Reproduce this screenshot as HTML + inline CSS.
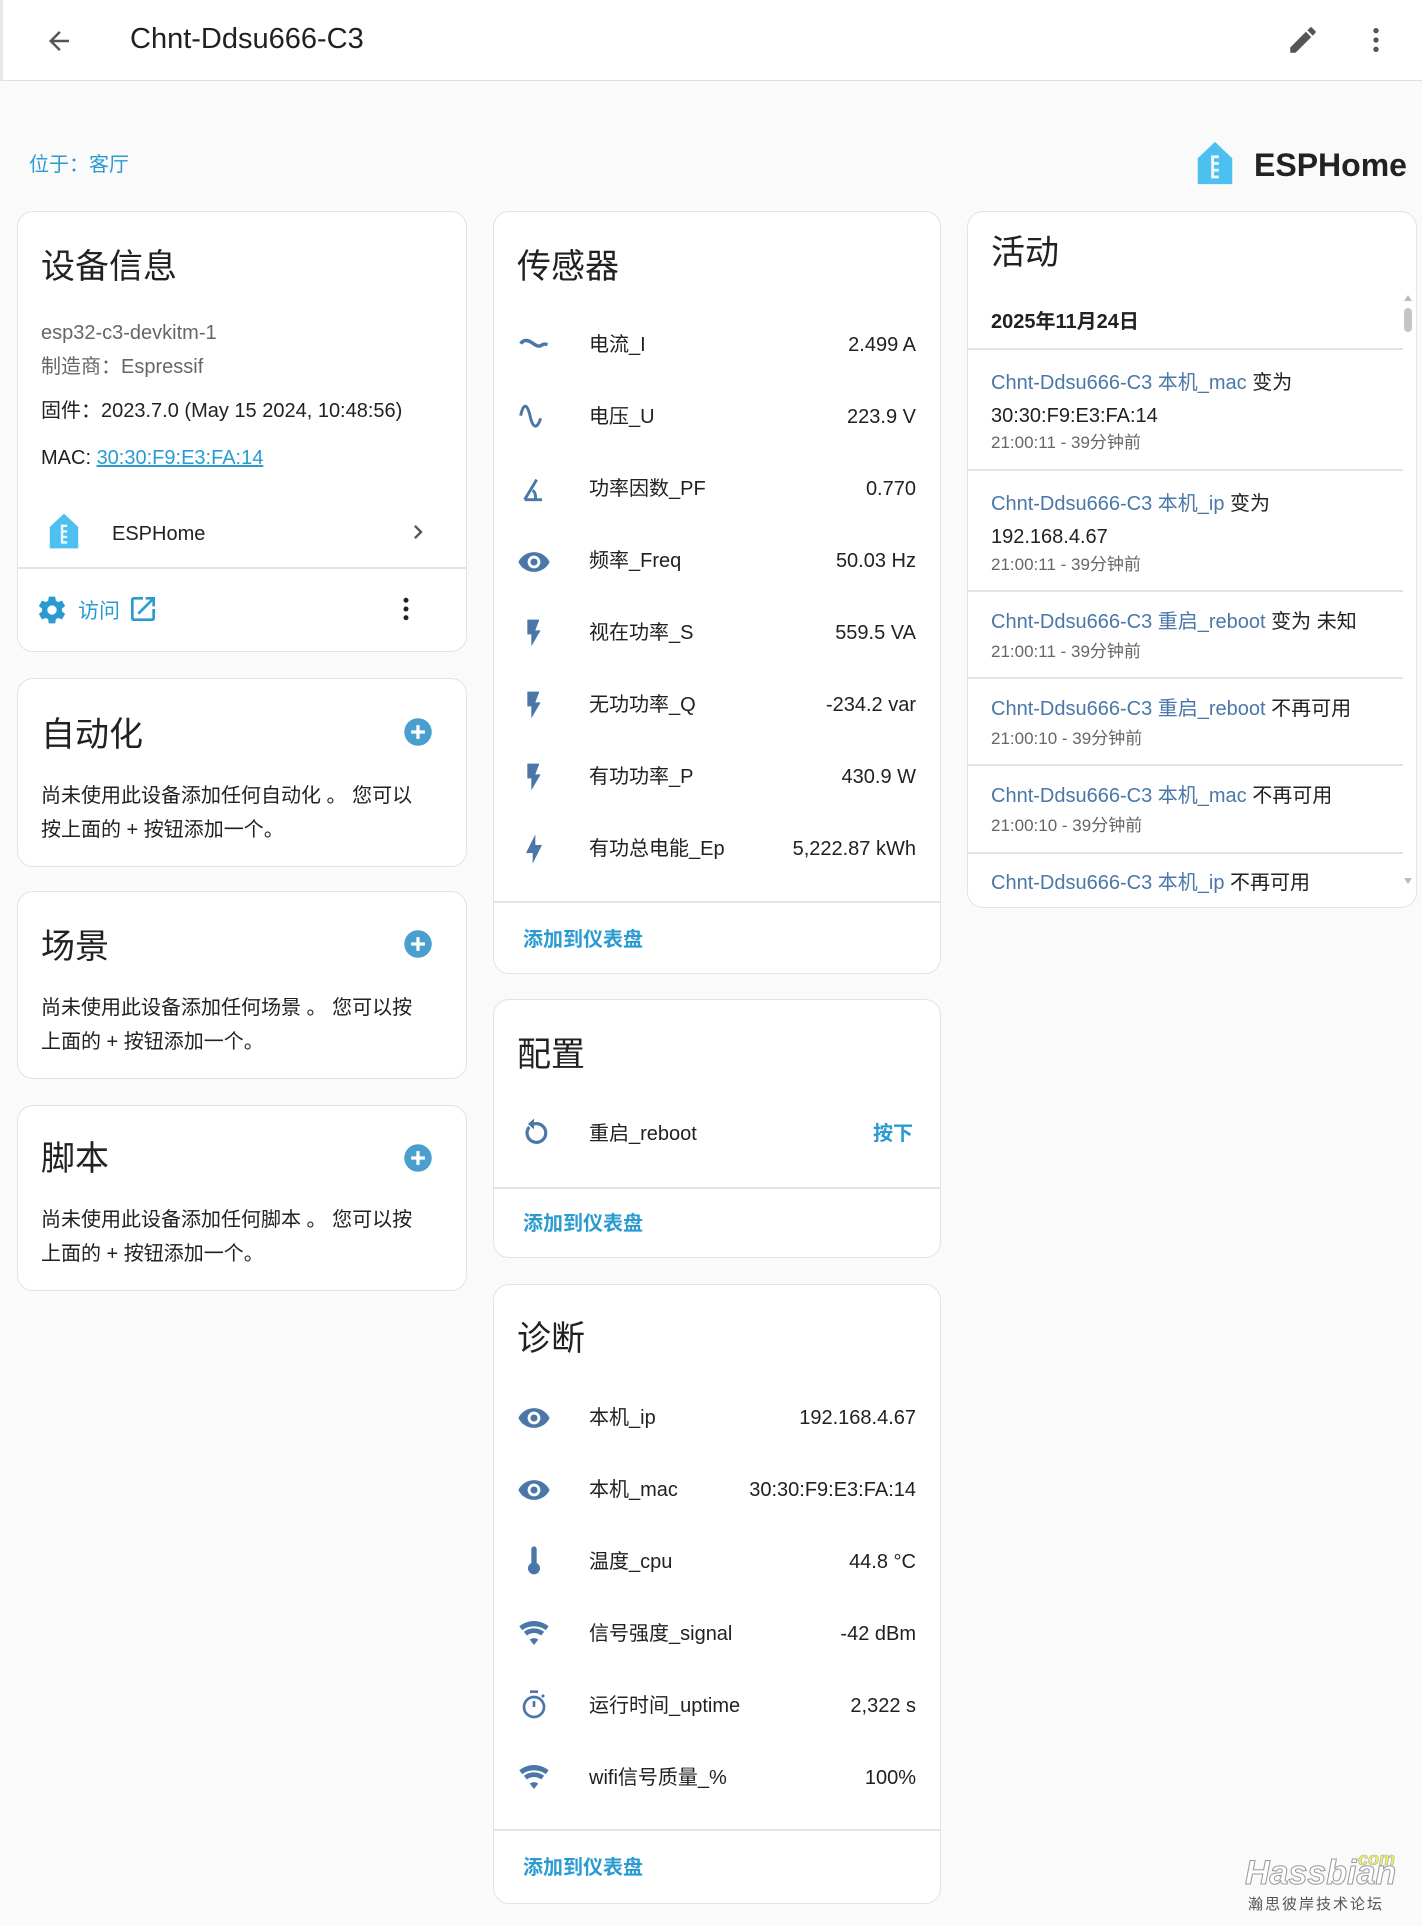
<!DOCTYPE html>
<html><head><meta charset="utf-8"><style>
*{margin:0;padding:0;box-sizing:border-box}
body{width:1422px;height:1926px;background:#fafafa;font-family:"Liberation Sans","Noto Sans CJK SC",sans-serif;color:#212121;position:relative;overflow:hidden}
.a{position:absolute;white-space:nowrap}
.card{position:absolute;background:#fff;border:1.5px solid #e3e3e3;border-radius:16px}
.t{position:absolute;font-size:34px;line-height:40px;color:#212121;margin-top:3px}
.r{position:absolute;font-size:20px;line-height:28px;margin-top:3px}
.hr{position:absolute;height:1.5px;background:#e3e3e3}
.link{color:#2a9bd1}
.ent{color:#4a77a8}
.ic{position:absolute}
.gray{color:#666}
</style></head><body>
<div class="a" style="left:0;top:0;width:1422px;height:81px;background:#fff;border-bottom:1.5px solid #e0e0e0;border-left:3px solid #e8e8e8"></div>
<svg class="ic" style="left:44px;top:26px" width="30" height="30" viewBox="0 0 24 24"><path d="M20 11H7.8l5.6-5.6L12 4l-8 8 8 8 1.4-1.4L7.8 13H20z" fill="#555"/></svg>
<div class="a" style="left:130px;top:20px;font-size:29px;line-height:38px;color:#212121">Chnt-Ddsu666-C3</div>
<svg class="ic" style="left:1286px;top:23px" width="34" height="34" viewBox="0 0 24 24"><path d="M3 17.25V21h3.75L17.8 9.94l-3.75-3.75zM20.7 7.04a1 1 0 000-1.41l-2.34-2.34a1 1 0 00-1.41 0l-1.83 1.83 3.75 3.75z" fill="#555"/></svg>
<svg class="ic" style="left:1360px;top:24px" width="32" height="32" viewBox="0 0 24 24"><circle cx="12" cy="5" r="2" fill="#555"/><circle cx="12" cy="12" r="2" fill="#555"/><circle cx="12" cy="19" r="2" fill="#555"/></svg>

<div class="a link" style="left:29px;top:152px;font-size:20px;line-height:26px">位于：客厅</div>
<svg class="ic" style="left:1192px;top:140px" width="46" height="46" viewBox="0 0 24 24"><path d="M12 1L3 9.5V23h18V9.5z" fill="#4dc0ef"/><path d="M10 8h4v1.5h-2.5v2h2.5v1.5h-2.5v2h2.5v1.5h-2.5v2h2.5V20H10z" fill="#fff" opacity=".9"/></svg>
<div class="a" style="left:1254px;top:145px;font-size:32px;line-height:40px;font-weight:bold;color:#222">ESPHome</div>

<div class="card" style="left:17px;top:211px;width:450px;height:441px"></div>
<div class="t" style="left:41px;top:244px">设备信息</div>
<div class="r gray" style="left:41px;top:316px">esp32-c3-devkitm-1</div>
<div class="r gray" style="left:41px;top:350px">制造商：Espressif</div>
<div class="r" style="left:41px;top:394px">固件：2023.7.0 (May 15 2024, 10:48:56)</div>
<div class="r" style="left:41px;top:441px">MAC: <span class="link" style="text-decoration:underline">30:30:F9:E3:FA:14</span></div>
<svg class="ic" style="left:45px;top:512px" width="38" height="38" viewBox="0 0 24 24"><path d="M12 1L3 9.5V23h18V9.5z" fill="#4dc0ef"/><path d="M10 8h4v1.5h-2.5v2h2.5v1.5h-2.5v2h2.5v1.5h-2.5v2h2.5V20H10z" fill="#fff" opacity=".9"/></svg>
<div class="r" style="left:112px;top:517px">ESPHome</div>
<svg class="ic" style="left:404px;top:518px" width="28" height="28" viewBox="0 0 24 24"><path d="M8.6 16.6L13.2 12 8.6 7.4 10 6l6 6-6 6z" fill="#555"/></svg>
<div class="hr" style="left:17px;top:567px;width:450px"></div>
<svg class="ic" style="left:36px;top:594px" width="32" height="32" viewBox="0 0 24 24"><path d="M12 15.5A3.5 3.5 0 1112 8.5a3.5 3.5 0 010 7zm7.43-2.530c.04-.32.07-.64.07-.97s-.03-.66-.07-1l2.11-1.63a.5.5 0 00.12-.64l-2-3.46a.5.5 0 00-.61-.22l-2.49 1a7.3 7.3 0 00-1.690-.98l-.38-2.65A.49.49 0 0014 2h-4a.49.49 0 00-.49.42l-.38 2.65c-.61.25-1.17.59-1.69.98l-2.49-1a.5.5 0 00-.61.22l-2 3.46a.5.5 0 00.12.64L4.57 11c-.04.34-.07.67-.07 1s.03.65.07.97l-2.11 1.66a.5.5 0 00-.12.64l2 3.46c.12.22.39.3.61.22l2.49-1.01c.52.4 1.08.73 1.69.98l.38 2.65c.03.24.24.42.49.42h4c.25 0 .46-.18.49-.42l.38-2.65c.61-.25 1.17-.58 1.69-.98l2.49 1.01c.22.08.49 0 .61-.22l2-3.46a.5.5 0 00-.12-.64z" fill="#2a9bd1"/></svg>
<div class="a link" style="left:78px;top:598px;font-size:21px;line-height:28px">访问</div>
<svg class="ic" style="left:127px;top:593px" width="32" height="32" viewBox="0 0 24 24"><path d="M14 3v2h3.6l-9.8 9.8 1.4 1.4L19 6.4V10h2V3zM19 19H5V5h7V3H5a2 2 0 00-2 2v14a2 2 0 002 2h14a2 2 0 002-2v-7h-2z" fill="#2a9bd1"/></svg>
<svg class="ic" style="left:391px;top:594px" width="30" height="30" viewBox="0 0 24 24"><circle cx="12" cy="5" r="2" fill="#222"/><circle cx="12" cy="12" r="2" fill="#222"/><circle cx="12" cy="19" r="2" fill="#222"/></svg>

<div class="card" style="left:17px;top:678px;width:450px;height:189px"></div>
<div class="t" style="left:41px;top:712px">自动化</div>
<svg class="ic" style="left:403px;top:717px" width="30" height="30" viewBox="0 0 24 24"><circle cx="12" cy="12" r="11" fill="#4a9fcf"/><path d="M12 6.5v11M6.5 12h11" stroke="#fff" stroke-width="2.6"/></svg>
<div class="r" style="left:41px;top:776px;line-height:34px">尚未使用此设备添加任何自动化 。 您可以<br>按上面的 + 按钮添加一个。</div>

<div class="card" style="left:17px;top:891px;width:450px;height:188px"></div>
<div class="t" style="left:41px;top:924px">场景</div>
<svg class="ic" style="left:403px;top:929px" width="30" height="30" viewBox="0 0 24 24"><circle cx="12" cy="12" r="11" fill="#4a9fcf"/><path d="M12 6.5v11M6.5 12h11" stroke="#fff" stroke-width="2.6"/></svg>
<div class="r" style="left:41px;top:988px;line-height:34px">尚未使用此设备添加任何场景 。 您可以按<br>上面的 + 按钮添加一个。</div>

<div class="card" style="left:17px;top:1105px;width:450px;height:186px"></div>
<div class="t" style="left:41px;top:1136px">脚本</div>
<svg class="ic" style="left:403px;top:1143px" width="30" height="30" viewBox="0 0 24 24"><circle cx="12" cy="12" r="11" fill="#4a9fcf"/><path d="M12 6.5v11M6.5 12h11" stroke="#fff" stroke-width="2.6"/></svg>
<div class="r" style="left:41px;top:1200px;line-height:34px">尚未使用此设备添加任何脚本 。 您可以按<br>上面的 + 按钮添加一个。</div>

<div class="card" style="left:493px;top:211px;width:448px;height:763px"></div>
<div class="t" style="left:517px;top:244px">传感器</div>
<svg class="ic" style="left:518px;top:329px" width="32" height="32" viewBox="0 0 24 24"><path d="M2 11c2-3 5-3 8-1s5 4 8 2c1.5-1 2.5-1 4 0" stroke="#4a77a8" stroke-width="2.6" fill="none"/></svg>
<svg class="ic" style="left:518px;top:401px" width="32" height="32" viewBox="0 0 24 24"><path d="M2 11C4 1 7 2 9 11s5 11 8 2" stroke="#4a77a8" stroke-width="2.2" fill="none"/></svg>
<svg class="ic" style="left:518px;top:473px" width="32" height="32" viewBox="0 0 24 24"><path d="M5 20h13M5 20L14 5M11 13c2 1.5 2.5 4 2 7" stroke="#4a77a8" stroke-width="2.2" fill="none"/></svg>
<svg class="ic" style="left:517px;top:545px" width="34" height="34" viewBox="0 0 24 24"><path d="M12 5C7 5 2.7 8.1 1 12c1.7 3.9 6 7 11 7s9.3-3.1 11-7c-1.7-3.9-6-7-11-7zm0 11.5a4.5 4.5 0 110-9 4.5 4.5 0 010 9zm0-7a2.5 2.5 0 100 5 2.5 2.5 0 000-5z" fill="#4a77a8"/></svg>
<svg class="ic" style="left:518px;top:617px" width="32" height="32" viewBox="0 0 24 24"><path d="M7 2v11h3v9l7-12h-4l3-8z" fill="#4a77a8"/></svg>
<svg class="ic" style="left:518px;top:689px" width="32" height="32" viewBox="0 0 24 24"><path d="M7 2v11h3v9l7-12h-4l3-8z" fill="#4a77a8"/></svg>
<svg class="ic" style="left:518px;top:761px" width="32" height="32" viewBox="0 0 24 24"><path d="M7 2v11h3v9l7-12h-4l3-8z" fill="#4a77a8"/></svg>
<svg class="ic" style="left:518px;top:833px" width="32" height="32" viewBox="0 0 24 24"><path d="M11 15H6l7-14v8h5l-7 14z" fill="#4a77a8"/></svg>
<div class="r" style="left:589px;top:328px">电流_I</div><div class="r" style="right:506px;top:328px">2.499 A</div>
<div class="r" style="left:589px;top:400px">电压_U</div><div class="r" style="right:506px;top:400px">223.9 V</div>
<div class="r" style="left:589px;top:472px">功率因数_PF</div><div class="r" style="right:506px;top:472px">0.770</div>
<div class="r" style="left:589px;top:544px">频率_Freq</div><div class="r" style="right:506px;top:544px">50.03 Hz</div>
<div class="r" style="left:589px;top:616px">视在功率_S</div><div class="r" style="right:506px;top:616px">559.5 VA</div>
<div class="r" style="left:589px;top:688px">无功功率_Q</div><div class="r" style="right:506px;top:688px">-234.2 var</div>
<div class="r" style="left:589px;top:760px">有功功率_P</div><div class="r" style="right:506px;top:760px">430.9 W</div>
<div class="r" style="left:589px;top:832px">有功总电能_Ep</div><div class="r" style="right:506px;top:832px">5,222.87 kWh</div>
<div class="hr" style="left:493px;top:901px;width:448px"></div>
<div class="r link" style="left:523px;top:923px;font-weight:bold">添加到仪表盘</div>

<div class="card" style="left:493px;top:999px;width:448px;height:259px"></div>
<div class="t" style="left:517px;top:1032px">配置</div>
<svg class="ic" style="left:518px;top:1116px" width="32" height="32" viewBox="0 0 24 24"><path d="M8.5 8.2A7 7 0 1012 6" stroke="#4a77a8" stroke-width="2.4" fill="none"/><path d="M12 2v8L7.5 6z" fill="#4a77a8"/></svg>
<div class="r" style="left:589px;top:1117px">重启_reboot</div>
<div class="r link" style="right:509px;top:1117px;font-weight:bold">按下</div>
<div class="hr" style="left:493px;top:1187px;width:448px"></div>
<div class="r link" style="left:523px;top:1207px;font-weight:bold">添加到仪表盘</div>

<div class="card" style="left:493px;top:1284px;width:448px;height:620px"></div>
<div class="t" style="left:517px;top:1316px">诊断</div>
<svg class="ic" style="left:517px;top:1401px" width="34" height="34" viewBox="0 0 24 24"><path d="M12 5C7 5 2.7 8.1 1 12c1.7 3.9 6 7 11 7s9.3-3.1 11-7c-1.7-3.9-6-7-11-7zm0 11.5a4.5 4.5 0 110-9 4.5 4.5 0 010 9zm0-7a2.5 2.5 0 100 5 2.5 2.5 0 000-5z" fill="#4a77a8"/></svg>
<svg class="ic" style="left:517px;top:1473px" width="34" height="34" viewBox="0 0 24 24"><path d="M12 5C7 5 2.7 8.1 1 12c1.7 3.9 6 7 11 7s9.3-3.1 11-7c-1.7-3.9-6-7-11-7zm0 11.5a4.5 4.5 0 110-9 4.5 4.5 0 010 9zm0-7a2.5 2.5 0 100 5 2.5 2.5 0 000-5z" fill="#4a77a8"/></svg>
<svg class="ic" style="left:518px;top:1545px" width="32" height="32" viewBox="0 0 24 24"><path d="M10 3a2 2 0 014 0v10.5a4.5 4.5 0 11-4 0z" fill="#4a77a8"/></svg>
<svg class="ic" style="left:518px;top:1617px" width="32" height="32" viewBox="0 0 24 24"><path d="M12 21l3.2-4a5 5 0 00-6.4 0zM12 3C7.8 3 4 4.6 1 7l2.2 2.8A14 14 0 0112 7a14 14 0 018.8 2.8L23 7c-3-2.4-6.8-4-11-4zm0 5.5c-2.9 0-5.5 1-7.6 2.6l2.2 2.8A9 9 0 0112 12a9 9 0 015.4 1.9l2.2-2.8A12.3 12.3 0 0012 8.5z" fill="#4a77a8"/></svg>
<svg class="ic" style="left:518px;top:1689px" width="32" height="32" viewBox="0 0 24 24"><circle cx="12" cy="13.5" r="7.5" stroke="#4a77a8" stroke-width="2" fill="none"/><path d="M9 2h6M12 13.5V9M18 6l1.5-1.5" stroke="#4a77a8" stroke-width="2"/></svg>
<svg class="ic" style="left:518px;top:1761px" width="32" height="32" viewBox="0 0 24 24"><path d="M12 21l3.2-4a5 5 0 00-6.4 0zM12 3C7.8 3 4 4.6 1 7l2.2 2.8A14 14 0 0112 7a14 14 0 018.8 2.8L23 7c-3-2.4-6.8-4-11-4zm0 5.5c-2.9 0-5.5 1-7.6 2.6l2.2 2.8A9 9 0 0112 12a9 9 0 015.4 1.9l2.2-2.8A12.3 12.3 0 0012 8.5z" fill="#4a77a8"/></svg>
<div class="r" style="left:589px;top:1401px">本机_ip</div><div class="r" style="right:506px;top:1401px">192.168.4.67</div>
<div class="r" style="left:589px;top:1473px">本机_mac</div><div class="r" style="right:506px;top:1473px">30:30:F9:E3:FA:14</div>
<div class="r" style="left:589px;top:1545px">温度_cpu</div><div class="r" style="right:506px;top:1545px">44.8 °C</div>
<div class="r" style="left:589px;top:1617px">信号强度_signal</div><div class="r" style="right:506px;top:1617px">-42 dBm</div>
<div class="r" style="left:589px;top:1689px">运行时间_uptime</div><div class="r" style="right:506px;top:1689px">2,322 s</div>
<div class="r" style="left:589px;top:1761px">wifi信号质量_%</div><div class="r" style="right:506px;top:1761px">100%</div>
<div class="hr" style="left:493px;top:1829px;width:448px"></div>
<div class="r link" style="left:523px;top:1851px;font-weight:bold">添加到仪表盘</div>

<div class="card" style="left:967px;top:211px;width:450px;height:697px"></div>
<div class="t" style="left:991px;top:230px">活动</div>
<div class="r" style="left:991px;top:305px;font-weight:bold">2025年11月24日</div>
<div class="hr" style="left:968px;top:348px;width:435px"></div>
<div class="r" style="left:991px;top:364px;line-height:33px"><span class="ent">Chnt-Ddsu666-C3 本机_mac</span> 变为<br>30:30:F9:E3:FA:14</div>
<div class="a gray" style="left:991px;top:432px;font-size:17px;line-height:22px">21:00:11 - 39分钟前</div>
<div class="hr" style="left:968px;top:469px;width:435px"></div>
<div class="r" style="left:991px;top:485px;line-height:33px"><span class="ent">Chnt-Ddsu666-C3 本机_ip</span> 变为<br>192.168.4.67</div>
<div class="a gray" style="left:991px;top:554px;font-size:17px;line-height:22px">21:00:11 - 39分钟前</div>
<div class="hr" style="left:968px;top:590px;width:435px"></div>
<div class="r" style="left:991px;top:605px"><span class="ent">Chnt-Ddsu666-C3 重启_reboot</span> 变为 未知</div>
<div class="a gray" style="left:991px;top:641px;font-size:17px;line-height:22px">21:00:11 - 39分钟前</div>
<div class="hr" style="left:968px;top:677px;width:435px"></div>
<div class="r" style="left:991px;top:692px"><span class="ent">Chnt-Ddsu666-C3 重启_reboot</span> 不再可用</div>
<div class="a gray" style="left:991px;top:728px;font-size:17px;line-height:22px">21:00:10 - 39分钟前</div>
<div class="hr" style="left:968px;top:764px;width:435px"></div>
<div class="r" style="left:991px;top:779px"><span class="ent">Chnt-Ddsu666-C3 本机_mac</span> 不再可用</div>
<div class="a gray" style="left:991px;top:815px;font-size:17px;line-height:22px">21:00:10 - 39分钟前</div>
<div class="hr" style="left:968px;top:852px;width:435px"></div>
<div class="a" style="left:968px;top:853px;width:435px;height:53px;overflow:hidden"><div class="r" style="left:23px;top:13px"><span class="ent">Chnt-Ddsu666-C3 本机_ip</span> 不再可用</div></div>
<div class="a" style="left:1404px;top:295px;width:0;height:0;border-left:4px solid transparent;border-right:4px solid transparent;border-bottom:6px solid #bbb"></div>
<div class="a" style="left:1404px;top:308px;width:8px;height:24px;border-radius:4px;background:#c4c4c4"></div>
<div class="a" style="left:1404px;top:878px;width:0;height:0;border-left:4px solid transparent;border-right:4px solid transparent;border-top:6px solid #bbb"></div>

<div class="a" style="left:1245px;top:1855px;font-size:34px;font-style:italic;font-weight:bold;color:#fff;-webkit-text-stroke:1px #999;line-height:36px">Hassbian</div>
<div class="a" style="left:1358px;top:1850px;font-size:18px;font-style:italic;font-weight:bold;color:#f0f060;-webkit-text-stroke:0.6px #aaa;line-height:18px">com</div>
<div class="a" style="left:1248px;top:1896px;font-size:15px;color:#555;letter-spacing:2px;line-height:18px">瀚思彼岸技术论坛</div>
</body></html>
